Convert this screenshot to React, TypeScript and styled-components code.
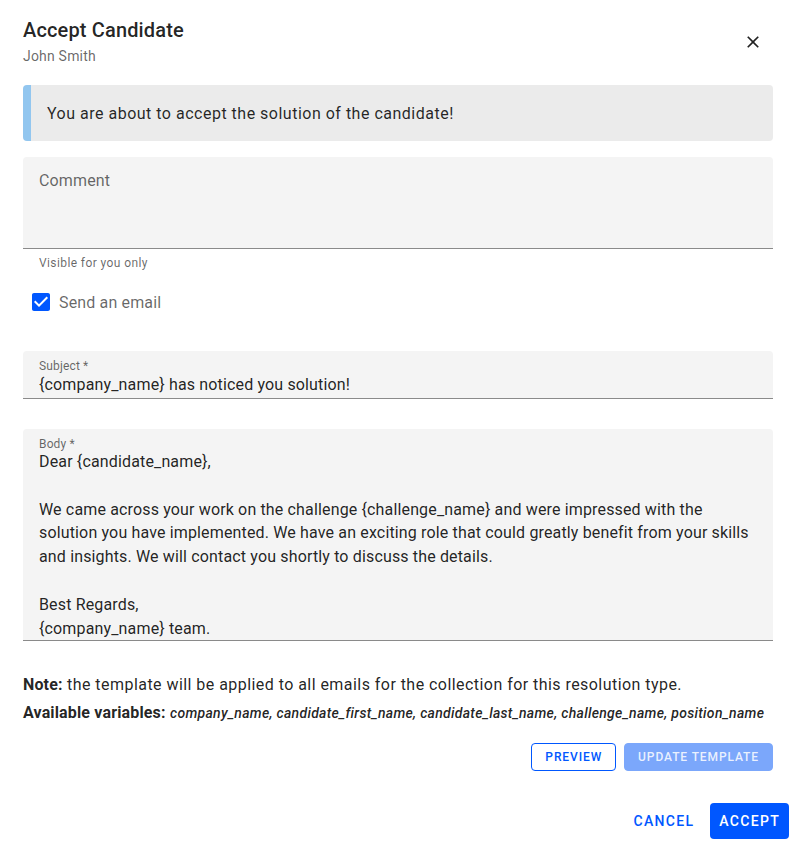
import * as React from 'react'
import styled, { createGlobalStyle } from 'styled-components'

const primary = '#0057ff'

const GlobalStyle = createGlobalStyle`
  html, body {
    margin: 0;
    padding: 0;
    background: #fff;
  }
  body {
    font-family: Roboto, "Liberation Sans", Arial, sans-serif;
    color: rgba(0, 0, 0, 0.87);
  }
  * {
    box-sizing: border-box;
  }
`

const Dialog = styled.div`
  display: flex;
  flex-direction: column;
  width: 100%;
  min-height: 100vh;
  background: #fff;
`

const Header = styled.header`
  align-items: center;
  display: flex;
  justify-content: space-between;
  padding: 14px 24px 0 23px;
`

const TitleBlock = styled.div`
  display: flex;
  flex-direction: column;
`

const Title = styled.h2`
  font-size: 20px;
  font-weight: 500;
  line-height: 32px;
  margin: 0;
  letter-spacing: 0.15px;
`

const Subtitle = styled.div`
  color: rgba(0, 0, 0, 0.6);
  font-size: 14px;
  line-height: 20px;
  letter-spacing: 0.2px;
`

const CloseButton = styled.button`
  align-items: center;
  background: none;
  border: none;
  cursor: pointer;
  display: flex;
  height: 36px;
  justify-content: center;
  margin-right: 2px;
  margin-top: 4px;
  padding: 0;
  width: 36px;
  svg {
    fill: rgba(0, 0, 0, 0.87);
  }
`

const Content = styled.div`
  display: flex;
  flex-direction: column;
  padding: 19px 24px 0 23px;
`

const Alert = styled.div`
  align-items: center;
  background: #ebebeb;
  border-left: 8px solid #92c6ef;
  border-radius: 4px;
  display: flex;
  font-size: 16px;
  height: 56px;
  letter-spacing: 0.5px;
  padding: 0 16px;
  color: rgba(0, 0, 0, 0.85);
`

const FilledField = styled.div<{ $height?: number }>`
  background: #f4f4f4;
  border-bottom: 1px solid #8a8a8a;
  border-radius: 4px 4px 0 0;
  display: flex;
  flex-direction: column;
  height: ${(p) => (p.$height ? `${p.$height}px` : 'auto')};
  overflow: hidden;
  padding: 8px 16px 1px 16px;
`

const CommentField = styled(FilledField)`
  margin-top: 16px;
  padding: 12px 16px;
`

const Placeholder = styled.div`
  color: rgba(0, 0, 0, 0.6);
  font-size: 16px;
  line-height: 24px;
  letter-spacing: 0.15px;
`

const HelperText = styled.div`
  color: rgba(0, 0, 0, 0.6);
  font-size: 12px;
  letter-spacing: 0.4px;
  line-height: 20px;
  margin: 4px 16px 0 16px;
`

const CheckRow = styled.label`
  align-items: center;
  display: flex;
  gap: 6px;
  height: 42px;
  margin-top: 8px;
  padding-left: 6px;
`

const CheckText = styled.span`
  color: rgba(0, 0, 0, 0.6);
  font-size: 16px;
  letter-spacing: 0.15px;
`

const FieldLabel = styled.div`
  color: rgba(0, 0, 0, 0.6);
  font-size: 12px;
  line-height: 14px;
  letter-spacing: 0.15px;
`

const FieldValue = styled.div`
  font-size: 16px;
  line-height: 24px;
  letter-spacing: 0.15px;
  white-space: pre-wrap;
`

const BodyValue = styled(FieldValue)`
  line-height: 23.8px;
  margin-top: -1px;
`

const Spacer = styled.div<{ $h: number }>`
  height: ${(p) => p.$h}px;
  flex-shrink: 0;
`

const Note = styled.p`
  font-size: 16px;
  line-height: 20px;
  margin: 0;
  letter-spacing: 0.45px;
  color: rgba(0, 0, 0, 0.87);
  white-space: nowrap;
  b {
    font-weight: 700;
    letter-spacing: 0.15px;
  }
`

const Variables = styled.span`
  font-size: 14px;
  font-style: italic;
  font-weight: 500;
  letter-spacing: 0.3px;
`

const TemplateActions = styled.div`
  display: flex;
  gap: 8px;
  justify-content: flex-end;
  margin-top: 20px;
`

const SmallButton = styled.button<{ $variant: 'outlined' | 'disabled' }>`
  background: ${(p) => (p.$variant === 'disabled' ? '#7ba7fb' : '#fff')};
  border: 1px solid ${(p) => (p.$variant === 'disabled' ? '#7ba7fb' : primary)};
  border-radius: 4px;
  color: ${(p) => (p.$variant === 'disabled' ? 'rgba(255,255,255,0.85)' : primary)};
  font-family: inherit;
  font-size: 12px;
  font-weight: 500;
  height: 28px;
  letter-spacing: 0.9px;
  padding: 0 13px;
  text-transform: uppercase;
`

const Actions = styled.div`
  align-items: center;
  display: flex;
  gap: 8px;
  justify-content: flex-end;
  margin-top: 24px;
  padding: 8px;
`

const ActionButton = styled.button<{ $contained?: boolean }>`
  background: ${(p) => (p.$contained ? primary : 'transparent')};
  border: none;
  border-radius: 4px;
  color: ${(p) => (p.$contained ? '#fff' : primary)};
  font-family: inherit;
  font-size: 14px;
  font-weight: 500;
  height: 36px;
  letter-spacing: 1.3px;
  padding: 0 ${(p) => (p.$contained ? 9 : 8)}px;
  text-transform: uppercase;
`

const CheckboxIcon = () => (
  <svg width="24" height="24" viewBox="0 0 24 24">
    <path
      fill={primary}
      d="M19 3H5c-1.11 0-2 .9-2 2v14c0 1.1.89 2 2 2h14c1.11 0 2-.9 2-2V5c0-1.1-.89-2-2-2zm-9 14l-5-5 1.41-1.41L10 14.17l7.59-7.59L19 8l-9 9z"
    />
  </svg>
)

const CloseIcon = () => (
  <svg width="20" height="20" viewBox="0 0 24 24">
    <path d="M19 6.41 17.59 5 12 10.59 6.41 5 5 6.41 10.59 12 5 17.59 6.41 19 12 13.41 17.59 19 19 17.59 13.41 12z" />
  </svg>
)

const body = `Dear {candidate_name},

We came across your work on the challenge {challenge_name} and were impressed with the solution you have implemented. We have an exciting role that could greatly benefit from your skills and insights. We will contact you shortly to discuss the details.

Best Regards,
{company_name} team.`

export default function App() {
  return (
    <>
      <GlobalStyle />
      <Dialog>
        <Header>
          <TitleBlock>
            <Title>Accept Candidate</Title>
            <Subtitle>John Smith</Subtitle>
          </TitleBlock>
          <CloseButton aria-label="close">
            <CloseIcon />
          </CloseButton>
        </Header>
        <Content>
          <Alert>You are about to accept the solution of the candidate!</Alert>
          <CommentField $height={92}>
            <Placeholder>Comment</Placeholder>
          </CommentField>
          <HelperText>Visible for you only</HelperText>
          <CheckRow>
            <CheckboxIcon />
            <CheckText>Send an email</CheckText>
          </CheckRow>
          <Spacer $h={28} />
          <FilledField>
            <FieldLabel>Subject *</FieldLabel>
            <FieldValue>{'{company_name} has noticed you solution!'}</FieldValue>
          </FilledField>
          <Spacer $h={30} />
          <FilledField $height={212}>
            <FieldLabel>Body *</FieldLabel>
            <BodyValue>{body}</BodyValue>
          </FilledField>
          <Spacer $h={34} />
          <Note>
            <b>Note:</b> the template will be applied to all emails for the collection for this resolution type.
          </Note>
          <Spacer $h={8} />
          <Note>
            <b>Available variables:</b>{' '}
            <Variables>company_name, candidate_first_name, candidate_last_name, challenge_name, position_name</Variables>
          </Note>
          <TemplateActions>
            <SmallButton $variant="outlined">Preview</SmallButton>
            <SmallButton $variant="disabled">Update template</SmallButton>
          </TemplateActions>
        </Content>
        <Actions>
          <ActionButton>Cancel</ActionButton>
          <ActionButton $contained>Accept</ActionButton>
        </Actions>
      </Dialog>
    </>
  )
}
